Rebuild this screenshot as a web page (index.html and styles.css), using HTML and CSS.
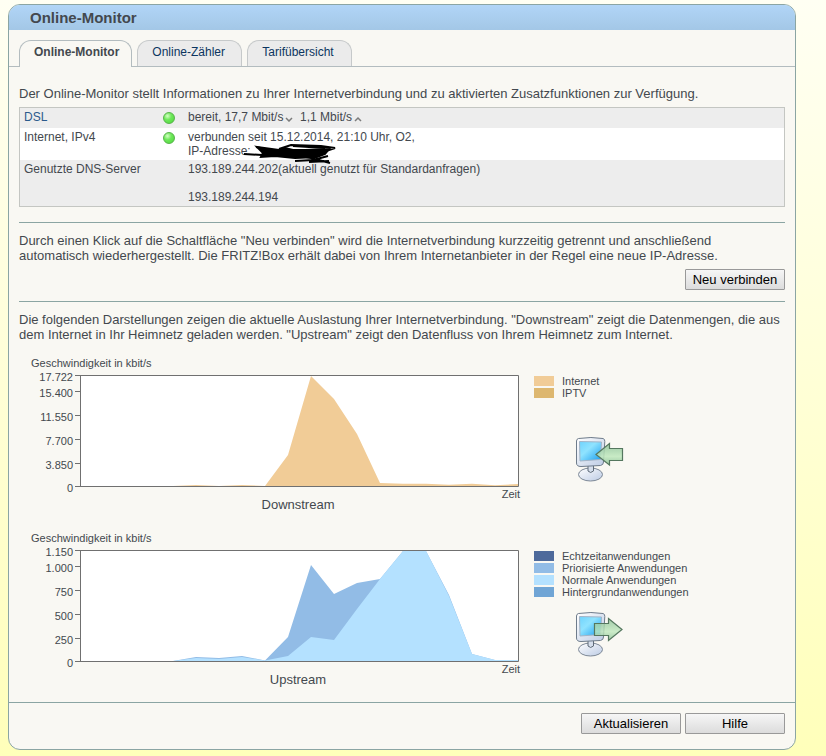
FILE: index.html
```html
<!DOCTYPE html>
<html lang="de">
<head>
    <meta charset="UTF-8">
    <meta name="viewport" content="width=device-width, initial-scale=1.0">
    <title>Online-Monitor</title>
    <link rel="stylesheet" href="styles.css">
</head>
<body>
    <div id="container">
        <header>
            <h1>Online-Monitor</h1>
        </header>

        <nav class="tabs">
            <a href="#monitor" class="active">Online-Monitor</a>
            <a href="#zaehler">Online-Zähler</a>
            <a href="#tarif">Tarifübersicht</a>
        </nav>

        <main>
            <p class="intro">Der Online-Monitor stellt Informationen zu Ihrer Internetverbindung und zu aktivierten Zusatzfunktionen zur Verfügung.</p>

            <table class="status">
                <tr>
                    <th scope="row"><a href="#dsl">DSL</a></th>
                    <td class="led"><span class="led-green"></span></td>
                    <td>bereit, 17,7 Mbit/s<svg class="arrow" width="10" height="6" viewBox="0 0 10 6"><path d="M3 2l3 3 3-3"/></svg>&nbsp; 1,1 Mbit/s<svg class="arrow" width="10" height="6" viewBox="0 0 10 6"><path d="M3 5l3-3 3 3"/></svg></td>
                </tr>
                <tr class="white">
                    <th scope="row">Internet, IPv4</th>
                    <td class="led"><span class="led-green"></span></td>
                    <td>verbunden seit 15.12.2014, 21:10 Uhr, O2,<br>
                        <span class="address">IP-Adresse:
                            <svg class="scribble" width="94" height="22" viewBox="0 0 94 22">
                                <path class="fill" d="M14 4l22 3 6-2 8 2h12l24-1-4 5-8 3-22 1-20-2-14 1 2-4z"/>
                                <path d="M1 11l18 1 20-2M13 4l24 5M36 6l12-4 30 1 14 2-9 3-6 4M50 3l32 2M52 18l18-1 15-4M58 13l10 2 19 5M66 19l20-1M68 13l6 5"/>
                            </svg>
                        </span>
                    </td>
                </tr>
                <tr>
                    <th scope="row">Genutzte DNS-Server</th>
                    <td class="led"></td>
                    <td>193.189.244.202(aktuell genutzt für Standardanfragen)<br><br>193.189.244.194</td>
                </tr>
            </table>

            <section>
                <p>Durch einen Klick auf die Schaltfläche "Neu verbinden" wird die Internetverbindung kurzzeitig getrennt und anschließend automatisch wiederhergestellt. Die FRITZ!Box erhält dabei von Ihrem Internetanbieter in der Regel eine neue IP-Adresse.</p>
                <div class="buttons">
                    <button type="button">Neu verbinden</button>
                </div>
            </section>

            <section>
                <p>Die folgenden Darstellungen zeigen die aktuelle Auslastung Ihrer Internetverbindung. "Downstream" zeigt die Datenmengen, die aus dem Internet in Ihr Heimnetz geladen werden. "Upstream" zeigt den Datenfluss von Ihrem Heimnetz zum Internet.</p>

                <div class="graph">
                    <svg class="chart" width="492" height="158" viewBox="0 0 492 158">
                        <text x="2" y="12">Geschwindigkeit in kbit/s</text>
                        <g class="labels">
                            <text x="44" y="26">17.722</text>
                            <text x="44" y="42">15.400</text>
                            <text x="44" y="66">11.550</text>
                            <text x="44" y="90">7.700</text>
                            <text x="44" y="114">3.850</text>
                            <text x="44" y="137">0</text>
                        </g>
                        <rect class="plot" x="51.5" y="20.5" width="438" height="111"/>
                        <path class="internet" d="M144 131l23-1 23 1 23-1 23 1 23-31 23-79 23 23 23 35 23 49 23 .7h23l23 1 23-1 23 1.500 23-1.200V131z"/>
                        <path class="axis" d="M46 20.500H489.500V131.500H46M51.500 20V132M46 36.500h5M46 60.500h5M46 84.500h5M46 108.500h5"/>
                        <text class="end" x="491" y="143">Zeit</text>
                        <text class="caption" x="269" y="154">Downstream</text>
                    </svg>
                    <div class="legend">
                        <ul>
                            <li><span class="swatch internet"></span>Internet</li>
                            <li><span class="swatch iptv"></span>IPTV</li>
                        </ul>
                        <svg class="monitor" width="50" height="48" viewBox="0 0 50 48">
                            <defs>
                                <linearGradient id="screen" x1="0" y1="0" x2="1" y2="1">
                                    <stop offset="0" stop-color="#6fd3fd"/>
                                    <stop offset=".4" stop-color="#8fe3ff"/>
                                    <stop offset="1" stop-color="#189df0"/>
                                </linearGradient>
                                <linearGradient id="case" x1="0" y1="0" x2="1" y2="1">
                                    <stop offset="0" stop-color="#fff"/>
                                    <stop offset="1" stop-color="#bccbe4"/>
                                </linearGradient>
                                <linearGradient id="arrow" x1="0" y1="0" x2="0" y2="1">
                                    <stop offset="0" stop-color="#8cc097"/>
                                    <stop offset=".6" stop-color="#bfe8bd"/>
                                    <stop offset="1" stop-color="#8abf93"/>
                                </linearGradient>
                            </defs>
                            <ellipse cx="15.500" cy="38.500" rx="12" ry="6.500" fill="url(#case)" stroke="#7d8896"/>
                            <path d="M13 29v6q2.500 3 5.500 0v-6z" fill="#d5deeb" stroke="#5f6b78"/>
                            <path d="M3.500 2.500Q16 .5 28 2.500q2 .5 1.800 3L28.500 26q0 3-3 3.500L6 30.500q-4.500 0-4.500-3.500V5q0-2 2-2.500z" fill="url(#case)" stroke="#6f7c8b"/>
                            <path d="M4.500 5.500L26.500 6 25.500 23.500 5 25z" fill="url(#screen)" stroke="#a4b4c6"/>
                            <path d="M21 18.500L34.500 7.500v5h13v12h-13v4.500z" fill="url(#arrow)" fill-opacity=".85" stroke="#55775f" stroke-width="1.200"/>
                        </svg>
                    </div>
                </div>

                <div class="graph">
                    <svg class="chart" width="492" height="158" viewBox="0 0 492 158">
                        <text x="2" y="12">Geschwindigkeit in kbit/s</text>
                        <g class="labels">
                            <text x="44" y="26">1.150</text>
                            <text x="44" y="42">1.000</text>
                            <text x="44" y="66">750</text>
                            <text x="44" y="90">500</text>
                            <text x="44" y="114">250</text>
                            <text x="44" y="137">0</text>
                        </g>
                        <rect class="plot" x="51.5" y="20.5" width="438" height="111"/>
                        <path class="prior" d="M144 131l23-4 23 1 23-2 23 4.500L259 107 282 35 305 64 328 53 351 49 374 21H397L420 65 443 124 466 130H489V131z"/>
                        <path class="normal" d="M144 131l23-3 23 1 23-2 23 3.500L259 126 282 107 305 110 328 79 351 49 374 21H397L420 66 443 124 466 130H489V131z"/>
                        <path class="axis" d="M46 20.500H489.500V131.500H46M51.500 20V132M46 36.500h5M46 60.500h5M46 84.500h5M46 108.500h5"/>
                        <text class="end" x="491" y="143">Zeit</text>
                        <text class="caption" x="269" y="154">Upstream</text>
                    </svg>
                    <div class="legend">
                        <ul>
                            <li><span class="swatch realtime"></span>Echtzeitanwendungen</li>
                            <li><span class="swatch prior"></span>Priorisierte Anwendungen</li>
                            <li><span class="swatch normal"></span>Normale Anwendungen</li>
                            <li><span class="swatch background"></span>Hintergrundanwendungen</li>
                        </ul>
                        <svg class="monitor" width="50" height="48" viewBox="0 0 50 48">
                            <ellipse cx="15.500" cy="38.500" rx="12" ry="6.500" fill="url(#case)" stroke="#7d8896"/>
                            <path d="M13 29v6q2.500 3 5.500 0v-6z" fill="#d5deeb" stroke="#5f6b78"/>
                            <path d="M3.500 2.500Q16 .5 28 2.500q2 .5 1.800 3L28.500 26q0 3-3 3.500L6 30.500q-4.500 0-4.500-3.500V5q0-2 2-2.500z" fill="url(#case)" stroke="#6f7c8b"/>
                            <path d="M4.500 5.500L26.500 6 25.500 23.500 5 25z" fill="url(#screen)" stroke="#a4b4c6"/>
                            <path d="M47 18.500L33.500 7.500v5h-14v12h14v5z" fill="url(#arrow)" fill-opacity=".8" stroke="#55775f" stroke-width="1.200"/>
                        </svg>
                    </div>
                </div>
            </section>
        </main>

        <footer class="buttons">
            <button type="button">Aktualisieren</button>
            <button type="button">Hilfe</button>
        </footer>
    </div>
</body>
</html>
```

FILE: styles.css
```css
body {
    font-family: Arial, "Liberation Sans", sans-serif;
    font-size: 13px;
    line-height: 15px;
    color: #43484e;
    margin: 0;
    padding: 4px 30px 6px 8px;
    background: linear-gradient(#fffff3, #ffffba);
}

p {
    margin: 0;
}

#container {
    border: 1px solid #8ba5a3;
    border-radius: 12px;
    background-color: #f9f8f3;
    overflow: hidden;
}

header {
    padding: 0 21px;
    background: linear-gradient(#b1d5f7, #a3c7e6);
}

h1 {
    margin: 0;
    font-size: 15px;
    line-height: 25px;
}

/* Tabs */
.tabs {
    display: flex;
    gap: 5px;
    padding: 10px 10px 0;
    border-bottom: 1px solid #b3bcbf;
}

.tabs a {
    box-sizing: border-box;
    min-width: 105px;
    padding: 4px 12px 7px 14px;
    border: 1px solid #c6c9ca;
    border-bottom: none;
    border-radius: 12px 12px 0 0;
    background-color: #ebebeb;
    color: #0b3560;
    font-size: 12px;
    line-height: 14px;
    text-decoration: none;
}

.tabs a.active {
    margin-bottom: -1px;
    padding-bottom: 8px;
    border-color: #b3bcbf;
    background-color: #f9f8f3;
    color: #43484e;
    font-weight: bold;
}

main {
    padding: 19px 10px 14px;
}

/* Connection state */
.status {
    width: 100%;
    margin: 6px 0 15px;
    border: 1px solid #c4c6c2;
    border-collapse: separate;
    border-spacing: 0;
    background-color: #ededed;
    font-size: 12px;
    line-height: 14px;
}

.status tr {
    height: 20px;
}

.status .white {
    background-color: #fff;
}

.status th,
.status td {
    padding: 2px 4px;
    font-weight: normal;
    text-align: left;
    vertical-align: top;
}

.status th {
    width: 128px;
}

.status .led {
    width: 20px;
}

.status a {
    color: #2b5a8c;
    text-decoration: none;
}

.led-green {
    display: block;
    width: 10px;
    height: 10px;
    margin: 2px 0 0 3px;
    border: 1px solid #57b34a;
    border-radius: 50%;
    background: radial-gradient(circle at 35% 30%, #d5ffc4, #6ee85a 40%, #4ed63c);
}

.arrow {
    vertical-align: -1px;
}

.arrow path {
    fill: none;
    stroke: #7c7c7c;
    stroke-width: 1.5;
}

.address {
    position: relative;
}

.scribble {
    position: absolute;
    left: 55px;
    top: -1px;
    fill: none;
    stroke: #000;
    stroke-width: 2;
}

.scribble .fill {
    fill: #000;
}

section {
    padding-top: 10px;
    border-top: 1px solid #8ba5a3;
}

section p {
    padding-right: 4px;
}

/* Buttons */
.buttons {
    display: flex;
    justify-content: flex-end;
    gap: 4px;
}

section .buttons {
    padding: 6px 0 11px;
}

footer.buttons {
    padding: 10px 10px 15px;
    border-top: 1px solid #8ba5a3;
}

button {
    min-width: 100px;
    height: 21px;
    padding: 0 6px;
    border: 1px solid #999;
    border-radius: 1px;
    background: linear-gradient(#f6f6f6, #dcdcdc);
    color: #000;
    font: 13px Arial, "Liberation Sans", sans-serif;
}

/* Graphs */
.graph {
    display: flex;
    gap: 13px;
    padding: 13px 0 0 10px;
}

.graph + .graph {
    padding-top: 17px;
}

.chart {
    flex: none;
    fill: #43484e;
    font-size: 11px;
}

.chart .labels,
.chart .end {
    text-anchor: end;
}

.chart .caption {
    font-size: 13px;
    text-anchor: middle;
}

.chart .plot {
    fill: #fff;
}

.chart .axis {
    fill: none;
    stroke: #707070;
}

.chart .internet {
    fill: #f1cc97;
}

.chart .prior {
    fill: #92bce6;
}

.chart .normal {
    fill: #b4e1ff;
}

.legend {
    display: flex;
    flex-direction: column;
    justify-content: space-between;
    padding: 20px 0 29px;
}

.legend ul {
    margin: 0;
    padding: 0;
    list-style: none;
    font-size: 11px;
    line-height: 12px;
}

.legend li {
    display: flex;
    align-items: center;
    gap: 8px;
}

.swatch {
    width: 20px;
    height: 10px;
}

.swatch.internet {
    background-color: #f1cc97;
}

.swatch.iptv {
    background-color: #ddb76f;
}

.swatch.realtime {
    background-color: #4e6a9b;
}

.swatch.prior {
    background-color: #92bce6;
}

.swatch.normal {
    background-color: #b4e1ff;
}

.swatch.background {
    background-color: #70a5d5;
}

.monitor {
    margin-left: 41px;
}
```
